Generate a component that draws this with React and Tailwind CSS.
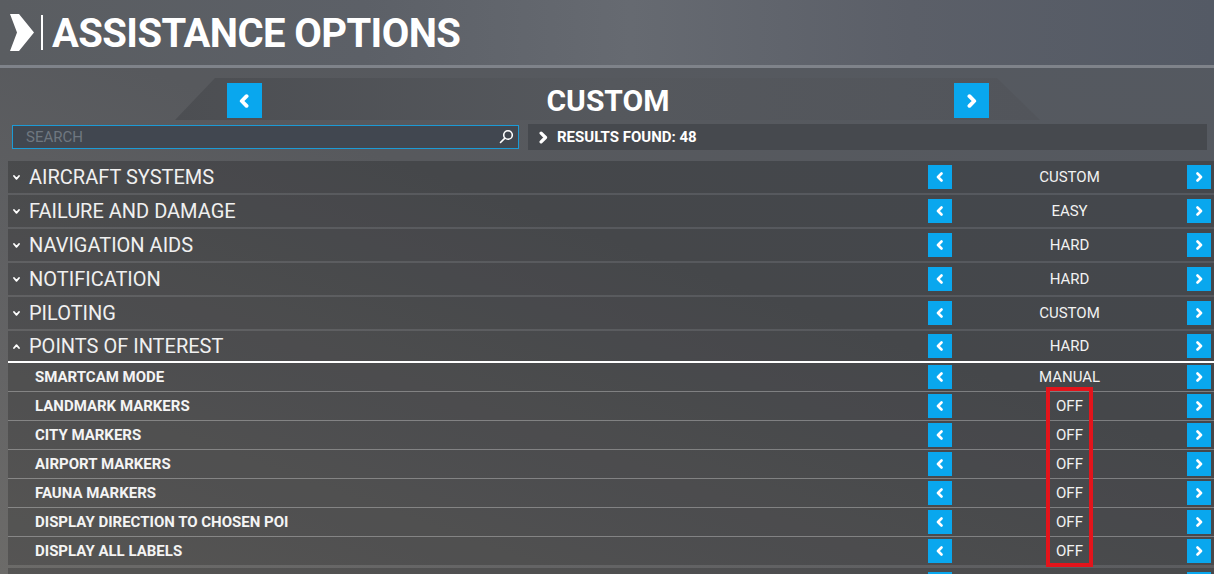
import React from 'react';

const categories = [
  { label: 'AIRCRAFT SYSTEMS', value: 'CUSTOM' },
  { label: 'FAILURE AND DAMAGE', value: 'EASY' },
  { label: 'NAVIGATION AIDS', value: 'HARD' },
  { label: 'NOTIFICATION', value: 'HARD' },
  { label: 'PILOTING', value: 'CUSTOM' },
];

const poiItems = [
  { label: 'SMARTCAM MODE', value: 'MANUAL' },
  { label: 'LANDMARK MARKERS', value: 'OFF' },
  { label: 'CITY MARKERS', value: 'OFF' },
  { label: 'AIRPORT MARKERS', value: 'OFF' },
  { label: 'FAUNA MARKERS', value: 'OFF' },
  { label: 'DISPLAY DIRECTION TO CHOSEN POI', value: 'OFF' },
  { label: 'DISPLAY ALL LABELS', value: 'OFF' },
];

const Chev = ({ dir = 'right', className = '', width = 2.6 }) => (
  <svg viewBox="0 0 8 10" className={className} fill="none" stroke="currentColor" strokeWidth={width} strokeLinecap="round" strokeLinejoin="round">
    <path d={dir === 'right' ? 'M2.5 1.5 L6 5 L2.5 8.5' : 'M5.5 1.5 L2 5 L5.5 8.5'} />
  </svg>
);

const Fold = ({ open }) => (
  <svg viewBox="0 0 7 5" className="w-[7px] h-[5px] text-white" fill="none" stroke="currentColor" strokeWidth="1.8" strokeLinecap="round" strokeLinejoin="round">
    <path d={open ? 'M1 4 L3.5 1.2 L6 4' : 'M1 1 L3.5 3.8 L6 1'} />
  </svg>
);

const Stepper = ({ value }) => (
  <div className="w-[283px] flex items-center">
    <button className="w-6 h-6 bg-[#09a7ee] flex items-center justify-center text-white">
      <Chev dir="left" className="w-[8px] h-[10px]" />
    </button>
    <span className="flex-1 text-center text-[15px] text-[#f2f2f2]">{value}</span>
    <button className="w-6 h-6 bg-[#09a7ee] flex items-center justify-center text-white">
      <Chev className="w-[8px] h-[10px]" />
    </button>
  </div>
);

const CategoryRow = ({ label, value, open = false }) => (
  <div className={`h-[32px] flex items-center pr-[3px] bg-black/20 ${open ? 'border-b-2 border-white' : 'mb-[2px]'}`}>
    <div className="flex-1 flex items-center pl-[5px]">
      {label && <Fold open={open} />}
      <span className="ml-[9px] text-[20px] text-[#f0f0f0]">{label}</span>
    </div>
    <Stepper value={value} />
  </div>
);

export default function App() {
  return (
    <div className="relative w-[1214px] h-[574px] overflow-hidden text-white font-['Roboto',sans-serif] bg-[linear-gradient(200deg,#545961_0%,#57595d_45%,#646465_80%,#6c6b69_100%)]">
      <header className="h-[65px] flex items-center pl-[10px] bg-[linear-gradient(90deg,#5a5d61,#5c6067_30%,#666a71_52%,#5b5f68_75%,#545a65)]">
        <svg viewBox="0 0 24 37" className="w-[24px] h-[37px]" fill="white">
          <polygon points="0,0 9,0 24,18.5 9,37 0,37 7,18.5" />
        </svg>
        <div className="w-[2px] h-[35px] ml-[7px] bg-white" />
        <h1 className="ml-[9px] mt-[2px] text-[40px] font-bold leading-none tracking-[-0.6px]">ASSISTANCE OPTIONS</h1>
      </header>
      <div className="h-[3px] bg-[#7f838a]" />
      <div className="h-[10px]" />

      <div className="h-[42px] pl-[175px]">
        <div className="w-[865px] h-full pt-[3px] pl-[52px] pr-[51px] flex items-center justify-between bg-[linear-gradient(90deg,#4c4e52,#55585d_50%,#52555b)] [clip-path:polygon(40px_0,calc(100%_-_43px)_0,100%_100%,0_100%)]">
          <button className="w-[35px] h-[35px] bg-[#09a7ee] flex items-center justify-center text-white">
            <Chev dir="left" className="w-[11px] h-[14px]" width={2.8} />
          </button>
          <span className="text-[30px] font-bold leading-none">CUSTOM</span>
          <button className="w-[35px] h-[35px] bg-[#09a7ee] flex items-center justify-center text-white">
            <Chev className="w-[11px] h-[14px]" width={2.8} />
          </button>
        </div>
      </div>

      <div className="mt-[4px] h-[26px] flex items-center pl-[12px]">
        <div className="w-[507px] h-[24px] border border-[#1c9bd6] bg-[#414750] flex items-center pl-[13px] pr-[4px]">
          <span className="flex-1 text-[15px] text-[#6f7780] leading-none">SEARCH</span>
          <svg viewBox="0 0 16 16" className="w-[16px] h-[16px]" fill="none" stroke="white" strokeWidth="1.6" strokeLinecap="round">
            <circle cx="10" cy="6" r="4.3" />
            <path d="M6.9 9.1 L2.5 13.5" />
          </svg>
        </div>
        <div className="ml-[9px] w-[679px] h-[26px] bg-[#46494e] flex items-center pl-[10px]">
          <Chev className="w-[10px] h-[13px]" width={2.6} />
          <span className="ml-[9px] text-[15px] font-bold leading-none">RESULTS FOUND: 48</span>
        </div>
      </div>

      <div className="mt-[11px] ml-[8px]">
        {categories.map((c) => (
          <CategoryRow key={c.label} label={c.label} value={c.value} />
        ))}
        <CategoryRow label="POINTS OF INTEREST" value="HARD" open />
        <div className="mb-[3px] bg-black/20">
          {poiItems.map((item, i) => (
            <div
              key={item.label}
              className={`flex items-center pr-[3px] ${i < poiItems.length - 1 ? 'h-[29px] border-b border-white/30' : 'h-[28px]'}`}
            >
              <span className="flex-1 pl-[27px] text-[15px] font-bold text-[#f4f4f4]">{item.label}</span>
              <Stepper value={item.value} />
            </div>
          ))}
        </div>
        <CategoryRow label="" value="" />
      </div>

      <div className="absolute left-[1046px] top-[387px] w-[47px] h-[180px] border-4 border-[#e3141b]" />
    </div>
  );
}
